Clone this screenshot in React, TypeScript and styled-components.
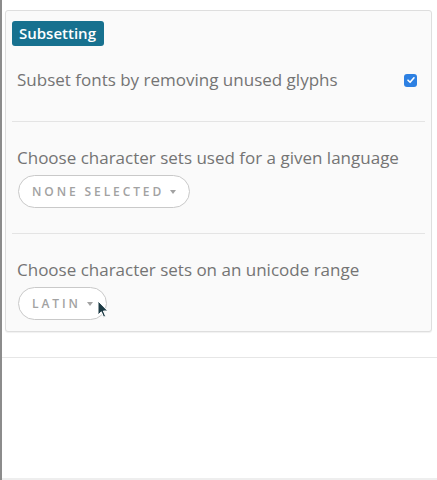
import styled, { createGlobalStyle } from "styled-components"

const GlobalStyle = createGlobalStyle`
	html, body {
		margin: 0;
		padding: 0;
		background: #ffffff;
	}
	body {
		font-family: "Open Sans", "Lato", sans-serif;
	}
`

const Frame = styled.div`
	height: 480px;
	border-left: 2px solid #8c8c8c;
	box-sizing: border-box;
	display: flex;
	flex-direction: column;
`

const Panel = styled.div`
	padding: 10px 5px 0 3px;
`

const Card = styled.section`
	background: #fafafa;
	border: 1px solid #dedede;
	border-radius: 3px;
	box-shadow: 0 1px 1px rgba(0, 0, 0, 0.06);
	padding: 10px 6px 0 6px;
	display: flex;
	flex-direction: column;
`

const Badge = styled.div`
	align-self: flex-start;
	background: #17718f;
	color: #ffffff;
	font-weight: 600;
	font-size: 15px;
	line-height: 25px;
	padding: 0 8px 0 7px;
	border-radius: 3px;
`

const Row = styled.div`
	display: flex;
	align-items: center;
	justify-content: space-between;
	padding: 24px 8px 31px 5px;
`

const Label = styled.div`
	color: #747474;
	font-size: 17px;
	line-height: 20px;
	white-space: nowrap;
`

const Check = styled.span`
	width: 13px;
	height: 13px;
	border-radius: 3px;
	background: #2d80e2;
	display: inline-flex;
	align-items: center;
	justify-content: center;
`

const Divider = styled.hr`
	margin: 0;
	border: 0;
	border-top: 1px solid #e4e4e4;
`

const Section = styled.div<{ $last?: boolean }>`
	display: flex;
	flex-direction: column;
	align-items: flex-start;
	gap: 7px;
	padding: 26px 5px ${(p) => (p.$last ? "11px" : "25px")};
`

const PillWrap = styled.div`
	position: relative;
	margin-left: 1px;
`

const Pill = styled.button`
	height: 33px;
	padding: 0 13px;
	border: 1px solid #c9c9c9;
	border-radius: 17px;
	background: #ffffff;
	color: #a2a2a2;
	font-family: "Open Sans", "Lato", sans-serif;
	font-size: 12px;
	font-weight: 600;
	letter-spacing: 2.9px;
	text-transform: uppercase;
	display: inline-flex;
	align-items: center;
	gap: 3px;
	cursor: pointer;
`

const Caret = styled.span`
	width: 0;
	height: 0;
	border-left: 3.5px solid transparent;
	border-right: 3.5px solid transparent;
	border-top: 4px solid #a2a2a2;
	margin-left: 3px;
`

const Cursor = styled.svg`
	position: absolute;
	left: 79px;
	top: 13px;
`

const Footer = styled.div`
	margin-top: 25px;
	border-top: 1px solid #e6e6e6;
	flex: 1;
	border-bottom: 2px solid #eeeeee;
`

export default function App() {
	return (
		<>
			<GlobalStyle />
			<Frame>
				<Panel>
					<Card>
						<Badge>Subsetting</Badge>
						<Row>
							<Label>Subset fonts by removing unused glyphs</Label>
							<Check>
								<svg width="10" height="10" viewBox="0 0 10 10">
									<path d="M2 5.2 L4.1 7.3 L8 2.8" fill="none" stroke="#ffffff" strokeWidth="1.6" strokeLinecap="round" strokeLinejoin="round" />
								</svg>
							</Check>
						</Row>
						<Divider />
						<Section>
							<Label>Choose character sets used for a given language</Label>
							<PillWrap>
								<Pill>
									None selected <Caret />
								</Pill>
							</PillWrap>
						</Section>
						<Divider />
						<Section $last>
							<Label>Choose character sets on an unicode range</Label>
							<PillWrap>
								<Pill>
									Latin <Caret />
								</Pill>
								<Cursor width="12" height="19" viewBox="0 0 12 19">
									<path d="M1 1 L1 15 L4.3 11.8 L6.6 17.2 L8.6 16.3 L6.4 11 L10.8 11 Z" fill="#1c3a44" stroke="#ffffff" strokeWidth="1" strokeLinejoin="round" />
								</Cursor>
							</PillWrap>
						</Section>
					</Card>
				</Panel>
				<Footer />
			</Frame>
		</>
	)
}
